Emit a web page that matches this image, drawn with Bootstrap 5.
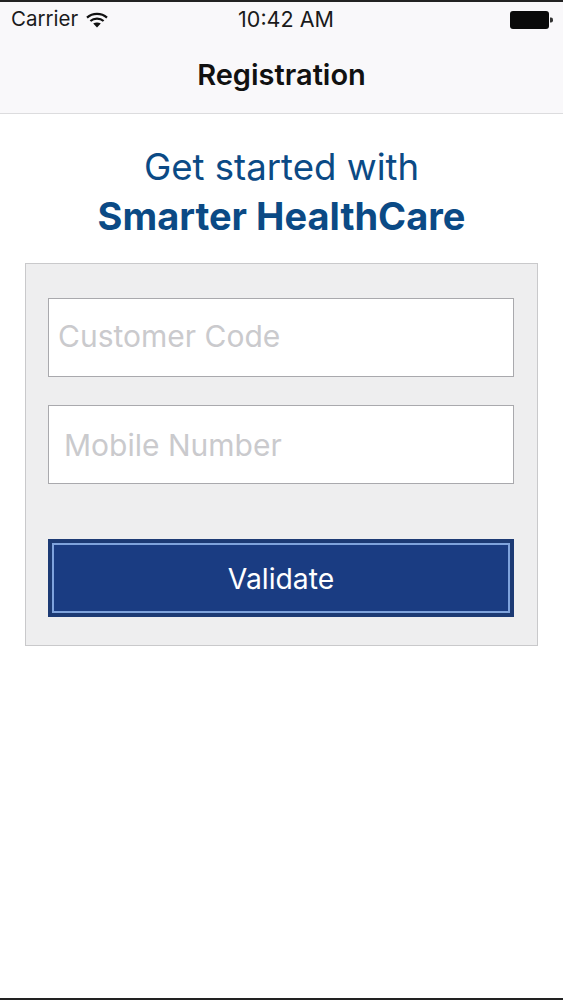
<!DOCTYPE html>
<html lang="en">
<head>
<meta charset="utf-8">
<title>Registration</title>
<link href="https://cdn.jsdelivr.net/npm/bootstrap@5.3.0/dist/css/bootstrap.min.css" rel="stylesheet">
<style>
body { font-family: Inter, "Liberation Sans", sans-serif; background: #fff; }
.phone-screen { height: 1000px; border-top: 2px solid #222; border-bottom: 2px solid #222; overflow: hidden; }
.top-area { height: 112px; background: #f9f8fa; border-bottom: 1px solid #dcdcde; }
.status-row { height: 35px; padding: 0 10px 0 11px; font-size: 20.5px; color: #1a1a1a; }
.status-side { width: 110px; }
.status-left { width: 118px; }
.status-time { font-size: 21.5px; font-weight: 400; }
.nav-title { height: 75px; font-size: 29px; font-weight: 600; color: #111; line-height: 1; }
.hero-heading { margin: 29px 0 22px; color: #0b4a85; font-size: 36.6px; line-height: 49px; font-weight: 400; }
.hero-heading strong { font-weight: 700; display: block; font-size: 38px; }
.form-panel { margin: 0 25px; height: 383px; padding: 34px 23px 0 22px; background: #eeeeef; border: 1px solid #c9c9cb; }
.field-input { height: 79px; border: 1px solid #a9a9ad; border-radius: 0; font-size: 30px; color: #333; padding: 0 10px; }
.field-input::placeholder { color: #cacacd; opacity: 1; }
.field-code { margin-bottom: 28px; padding: 0 9px 4px; }
.field-mobile { padding-left: 15px; margin-bottom: 55px; }
.validate-btn { height: 78px; border: 0; border-radius: 0; padding-top: 8px; background: #1a3c82; color: #fff; font-size: 28.3px; outline: 2px solid #7fa3dc; outline-offset: -6px; box-shadow: inset 0 0 0 4px #1c3a74; }
.validate-btn:hover { background: #1a3c82; color: #fff; }
</style>
</head>
<body>
<div class="phone-screen">
  <div class="top-area">
    <div class="status-row d-flex align-items-center justify-content-between">
      <div class="status-side status-left d-flex align-items-center gap-2">
        <span>Carrier</span>
        <svg width="22" height="18" viewBox="0 0 22 16" aria-hidden="true">
          <path d="M1 5.6C6.6.6 15.4.6 21 5.6" fill="none" stroke="#111" stroke-width="2.2"/>
          <path d="M4.4 9C8 5.8 14 5.8 17.6 9" fill="none" stroke="#111" stroke-width="2.2"/>
          <path d="M7.2 11.6C9.3 10 12.7 10 14.8 11.6L11 15.6Z" fill="#111"/>
        </svg>
      </div>
      <div class="status-time">10:42 AM</div>
      <div class="status-side d-flex justify-content-end align-items-center">
        <svg width="43" height="18" viewBox="0 0 43 18" aria-hidden="true">
          <rect x="0" y="0" width="39" height="18" rx="3" fill="#0a0a0a"/>
          <path d="M40 6.5h1a2 2 0 0 1 2 2v1a2 2 0 0 1-2 2h-1Z" fill="#333"/>
        </svg>
      </div>
    </div>
    <div class="nav-title d-flex align-items-center justify-content-center">Registration</div>
  </div>
  <h1 class="hero-heading text-center">Get started with <strong>Smarter HealthCare</strong></h1>
  <form class="form-panel">
    <input class="form-control field-input field-code" type="text" placeholder="Customer Code" aria-label="Customer Code">
    <input class="form-control field-input field-mobile" type="text" placeholder="Mobile Number" aria-label="Mobile Number">
    <button type="button" class="btn validate-btn w-100">Validate</button>
  </form>
</div>
<script src="https://cdn.jsdelivr.net/npm/bootstrap@5.3.0/dist/js/bootstrap.bundle.min.js"></script>
</body>
</html>
